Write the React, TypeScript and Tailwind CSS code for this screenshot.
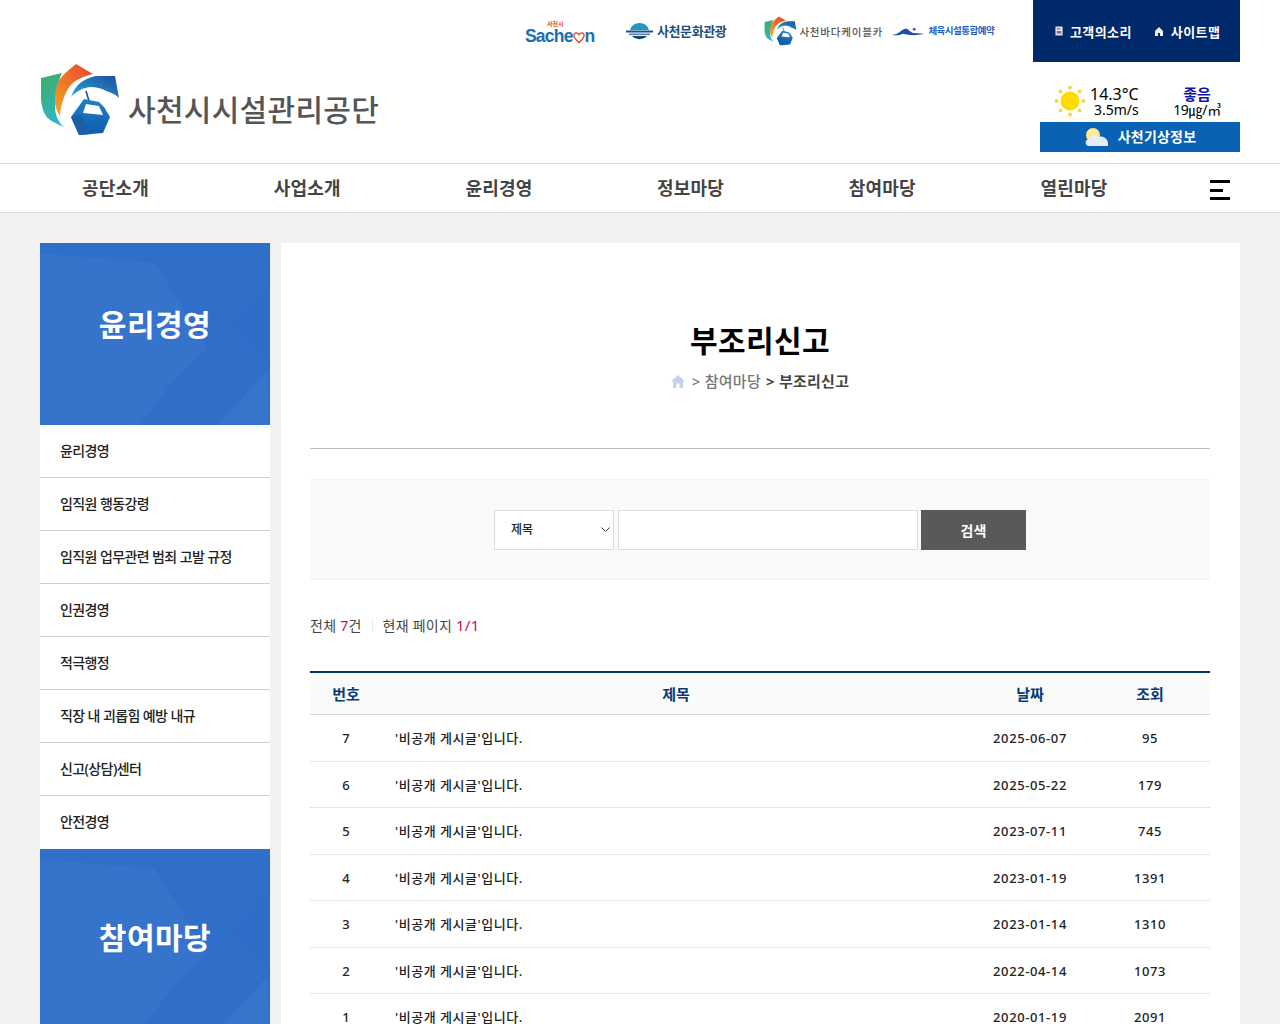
import React from 'react';

const NAV = ['공단소개', '사업소개', '윤리경영', '정보마당', '참여마당', '열린마당'];

const SIDE = [
  '윤리경영',
  '임직원 행동강령',
  '임직원 업무관련 범죄 고발 규정',
  '인권경영',
  '적극행정',
  '직장 내 괴롭힘 예방 내규',
  '신고(상담)센터',
  '안전경영',
];

const ROWS = [
  { no: 7, date: '2025-06-07', views: 95 },
  { no: 6, date: '2025-05-22', views: 179 },
  { no: 5, date: '2023-07-11', views: 745 },
  { no: 4, date: '2023-01-19', views: 1391 },
  { no: 3, date: '2023-01-14', views: 1310 },
  { no: 2, date: '2022-04-14', views: 1073 },
  { no: 1, date: '2020-01-19', views: 2091 },
];

// the shield + cable car mark, also used small in the top links
const LogoMark: React.FC<{ className?: string }> = ({ className }) => (
  <svg className={className} viewBox="0 0 80 76" fill="none">
    <defs>
      <linearGradient id="lg1" x1="0" y1="0" x2="0.4" y2="1">
        <stop offset="0" stopColor="#3fae5a" />
        <stop offset="1" stopColor="#2fb5c9" />
      </linearGradient>
      <linearGradient id="lg2" x1="1" y1="0" x2="0" y2="1">
        <stop offset="0" stopColor="#e8402f" />
        <stop offset="1" stopColor="#f5a623" />
      </linearGradient>
      <linearGradient id="lg3" x1="0" y1="1" x2="1" y2="0">
        <stop offset="0" stopColor="#2aa5d8" />
        <stop offset="1" stopColor="#1c4f9e" />
      </linearGradient>
      <linearGradient id="lg4" x1="0" y1="0" x2="0" y2="1">
        <stop offset="0" stopColor="#1f80cc" />
        <stop offset="1" stopColor="#0f5cab" />
      </linearGradient>
    </defs>
    <path d="M1 15 L22 10 C17 20 15 34 15 46 C16 54 19 60 24 64 C14 60 8 56 6 53 C2 46 1 40 1 33 Z" fill="url(#lg1)" />
    <path d="M36 1 L53 11 C44 13 38 16 34 19 C27 24 21 38 20 53 C17 48 15 44 15 39 C15 30 16 24 18 19 C22 12 30 6 36 1 Z" fill="url(#lg2)" />
    <path d="M31 34 C34 26 38 21 43 18 C48 15 53 13 59 13 L75 13 L79 35 C75 31 70 29 66 28 C61 25 56 24 51 24 C45 24 36 28 31 34 Z" fill="url(#lg3)" />
    <path d="M46 28 L49 38" stroke="#1c4f9e" strokeWidth="1.6" />
    <path d="M44 36 L59 39 L64 44 L70 54 L63 70 L39 72 L31 54 Z" fill="url(#lg4)" />
    <path d="M46 41 L59 43 L63 52 L43 50 Z" fill="#ffffff" />
    <path d="M31 54 L41 52 L52 71 L39 72 Z" fill="#1a5fa8" />
  </svg>
);

const SideBanner: React.FC<{ title: string; className: string; titleClass: string }> = ({ title, className, titleClass }) => (
  <div className={`relative overflow-hidden bg-[#2f6fca] flex justify-center text-white ${className}`}>
    <svg className="absolute left-0 top-0 w-[230px] h-[182px]" viewBox="0 0 230 182" preserveAspectRatio="none">
      <polygon points="0,10 115,20 167,105 133,138 100,182 0,182" fill="#ffffff" opacity="0.035" />
      <polygon points="177,182 227,128 230,182" fill="#ffffff" opacity="0.04" />
      <polygon points="193,82 230,40 230,119" fill="#1f5fc0" opacity="0.15" />
    </svg>
    <span className={`relative text-[30px] font-semibold leading-none tracking-[0.5px] ${titleClass}`}>{title}</span>
  </div>
);

export default function App() {
  return (
    <div className="h-[1024px] overflow-hidden bg-[#f1f1f1] font-['Noto_Sans','Noto_Sans_CJK_KR',sans-serif] text-[#333]">
      <header className="bg-white border-b border-[#dcdcdc]">
        <div className="h-[164px] border-b border-[#dedede] px-[40px] flex">
          <div className="flex-1 flex flex-col">
            {/* top partner links */}
            <div className="h-[62px] flex items-center pl-[485px] pt-[1px]">
              <div className="w-[70px] flex flex-col items-start">
                <span className="text-[6px] leading-[8px] text-[#e0452f] font-bold pl-[22px] whitespace-nowrap">사천시</span>
                <div className="flex items-center leading-[16px] text-[17.500px] font-bold text-[#1b6eb5] tracking-[-0.8px] font-['Liberation_Sans',sans-serif]">
                  <span>Sache</span>
                  <svg className="w-[12px] h-[14px] mt-[2px]" viewBox="0 0 13 14" fill="none">
                    <path d="M6.5 13 C2 9 1 7 1 5 C1 2.500 4.500 1.500 6.500 4.500 C8.500 1.500 12 2.500 12 5 C12 7 11 9 6.500 13 Z" stroke="#e8502f" strokeWidth="1.6" />
                  </svg>
                  <span>n</span>
                </div>
              </div>
              <div className="ml-[31px] flex items-center gap-[4px]">
                <svg className="w-[27px] h-[24px]" viewBox="0 0 27 24">
                  <path d="M4 10 A10 10 0 0 1 23 10 Z" fill="#1f9ab8" />
                  <rect x="0" y="10.500" width="27" height="2" fill="#1f4f8f" />
                  <rect x="3" y="13.500" width="21" height="1.600" fill="#5a7fa8" />
                  <path d="M6 16 H21 A9 7 0 0 1 6 16 Z" fill="#16427f" />
                </svg>
                <span className="text-[13px] font-bold text-[#1d4f80] tracking-[-0.4px]">사천문화관광</span>
              </div>
              <div className="ml-[38px] flex items-center">
                <LogoMark className="w-[33px] h-[31px]" />
                <span className="ml-[2px] w-[93px] text-[10.500px] leading-[14px] font-medium text-[#555] tracking-[0.8px] whitespace-nowrap">사천바다케이블카</span>
              </div>
              <div className="flex items-center">
                <svg className="w-[32px] h-[12px]" viewBox="0 0 36 12" fill="none">
                  <path d="M0 9 C8 9 10 3 16 2 C19 3 20 6 24 7 L36 8 C26 11 18 9 12 8 C8 10 4 10 0 9 Z" fill="#1f4fa8" />
                  <circle cx="25" cy="3" r="1.500" fill="#1f4fa8" />
                </svg>
                <span className="ml-[4px] text-[9.500px] font-bold text-[#1d5fc0] tracking-[-0.5px] whitespace-nowrap">체육시설통합예약</span>
              </div>
            </div>
            {/* logo */}
            <div className="flex items-start">
              <LogoMark className="w-[80px] h-[76px] mt-[1px]" />
              <span className="ml-[8px] mt-[28px] text-[30px] leading-[40px] font-medium text-[#555] tracking-[0.3px]">사천시시설관리공단</span>
            </div>
          </div>
          <div className="w-[207px] flex flex-col items-end">
            <div className="w-[207px] h-[62px] bg-[#00296b] flex items-center pl-[22px] pt-[3px] text-white text-[13px] font-bold tracking-[0.4px]">
              <svg className="w-[8px] h-[10px] mr-[7px] -mt-[3px]" viewBox="0 0 9 10">
                <rect x="0.500" y="0" width="8" height="10" fill="#e8e8e8" />
                <rect x="2" y="2" width="4" height="1.200" fill="#556" />
                <rect x="2" y="5" width="5" height="3" fill="#778" />
              </svg>
              <span>고객의소리</span>
              <svg className="w-[8px] h-[9px] ml-[23px] mr-[8px] -mt-[3px]" viewBox="0 0 8 9">
                <path d="M4 0 L8 4 V9 H5 V6 H3 V9 H0 V4 Z" fill="#eeeeee" />
              </svg>
              <span>사이트맵</span>
            </div>
            <div className="w-[200px] h-[60px] flex items-start">
              <svg className="w-[32px] h-[32px] ml-[14px] mt-[23px] shrink-0" viewBox="0 0 32 32">
                <circle cx="16" cy="16" r="9.500" fill="#ffdc00" />
                <g fill="#f2d94e">
                  <circle cx="16" cy="2.500" r="2" />
                  <circle cx="16" cy="29.500" r="2" />
                  <circle cx="2.500" cy="16" r="2" />
                  <circle cx="29.500" cy="16" r="2" />
                  <circle cx="6.500" cy="6.500" r="2" />
                  <circle cx="25.500" cy="6.500" r="2" />
                  <circle cx="6.500" cy="25.500" r="2" />
                  <circle cx="25.500" cy="25.500" r="2" />
                </g>
              </svg>
              <div className="mt-[24px] ml-[4px] w-[52px] text-black whitespace-nowrap">
                <div className="text-[16px] leading-[16px]">14.3°C</div>
                <div className="text-[14px] leading-[16px] pl-[4px]">3.5m/s</div>
              </div>
              <div className="ml-[28px] mt-[24px] w-[54px] text-center">
                <div className="text-[15px] leading-[16px] font-bold text-[#1414a8]">좋음</div>
                <div className="text-[14px] leading-[16px] text-black tracking-[-0.3px]">19㎍/㎥</div>
              </div>
            </div>
            <div className="w-[200px] h-[30px] pb-[1px] bg-[#0a62b4] flex items-center justify-center text-white text-[14px] font-semibold tracking-[0.2px]">
              <svg className="w-[26px] h-[20px] mr-[8px]" viewBox="0 0 26 20">
                <circle cx="9" cy="8" r="7" fill="#ffe98a" />
                <path d="M5 19 C1 19 0 13 5 12 C6 7 13 6 15 10 C20 8 25 13 24 19 Z" fill="#e6ecfa" />
              </svg>
              <span>사천기상정보</span>
            </div>
          </div>
        </div>
        <nav className="h-[48px] px-[40px] flex items-center relative">
          {NAV.map((n) => (
            <div key={n} className="w-[191.700px] pl-[42px] pt-[1px] text-[18px] font-bold text-[#444] leading-[47px] tracking-[0.2px]">{n}</div>
          ))}
          <div className="absolute left-[1210px] top-[16px] w-[20px] h-[20px] flex flex-col justify-between">
            <span className="block h-[3px] w-[20px] bg-black" />
            <span className="block h-[3px] w-[13px] bg-black" />
            <span className="block h-[3px] w-[20px] bg-black" />
          </div>
        </nav>
      </header>

      <div className="px-[40px] pt-[30px] flex">
        <aside className="w-[230px] shrink-0">
          <SideBanner title="윤리경영" className="h-[182px]" titleClass="mt-[67px]" />
          <ul className="bg-white">
            {SIDE.map((s, i) => (
              <li key={s} className={`h-[53px] pl-[20px] pb-[2px] flex items-center text-[14px] font-medium tracking-[-0.6px] text-[#222] ${i < SIDE.length - 1 ? 'border-b border-[#cfcfcf]' : ''}`}>{s}</li>
            ))}
          </ul>
          <SideBanner title="참여마당" className="h-[182px]" titleClass="mt-[74px]" />
        </aside>

        <main className="ml-[11px] w-[959px] bg-white pl-[29px] pr-[30px]">
          <div className="h-[206px] border-b border-[#bdbdbd] flex flex-col items-center">
            <h2 className="mt-[76px] text-[30px] leading-[44px] font-bold text-black tracking-[0.4px]">부조리신고</h2>
            <div className="mt-[6px] flex items-center text-[15px] leading-[24px] font-medium text-[#777] tracking-[0.25px]">
              <svg className="w-[14px] h-[13px] mr-[7px]" viewBox="0 0 14 13">
                <path d="M7 0 L14 6.500 H12 V13 H8.500 V8.500 H5.500 V13 H2 V6.500 H0 Z" fill="#c3d2e6" />
              </svg>
              <span>&gt; 참여마당</span>
              <span className="ml-[5px] font-bold text-[#444]">&gt; 부조리신고</span>
            </div>
          </div>

          <div className="mt-[30px] h-[101px] bg-[#fafafa] border-t border-b border-[#f3f3f3] flex items-center justify-center">
            <div className="relative w-[120px] h-[40px]">
              <select className="appearance-none w-[120px] h-[40px] bg-white border border-[#dcdcdc] pl-[16px] pt-[1px] text-[12px] font-medium text-[#222]" defaultValue="제목">
                <option>제목</option>
              </select>
              <svg className="absolute right-[4px] top-[17px] w-[9px] h-[6px]" viewBox="0 0 9 6" fill="none">
                <path d="M0.500 0.500 L4.500 4.500 L8.500 0.500" stroke="#333" strokeWidth="1" />
              </svg>
            </div>
            <input className="ml-[4px] w-[300px] h-[40px] bg-white border border-[#dcdcdc]" />
            <button className="ml-[3px] w-[105px] h-[40px] pt-[1px] bg-[#595959] text-white text-[14px] font-semibold">검색</button>
          </div>

          <div className="mt-[33px] h-[24px] flex items-center text-[14px] text-[#444] tracking-[0.25px]">
            <span>전체 <span className="text-[#c8104e]">7</span>건</span>
            <span className="mx-[10px] w-px h-[12px] bg-[#e6e6e6]" />
            <span>현재 페이지 <span className="text-[#c8104e] text-[15px]">1/1</span></span>
          </div>

          <table className="mt-[34px] w-[900px] table-fixed border-t-2 border-[#003764] text-[13px]">
            <thead>
              <tr className="h-[42.500px] bg-[#fafafa] border-b border-[#d8d8d8] text-[15px] text-[#0a3a78]">
                <th className="w-[72px] pt-[1px] font-bold">번호</th>
                <th className="pt-[1px] font-bold">제목</th>
                <th className="w-[120px] pt-[1px] font-bold">날짜</th>
                <th className="w-[120px] pt-[1px] font-bold">조회</th>
              </tr>
            </thead>
            <tbody>
              {ROWS.map((r) => (
                <tr key={r.no} className="h-[46.500px] border-b border-[#e6e6e6] text-center font-medium text-[#222]">
                  <td className="pt-[2px]">{r.no}</td>
                  <td className="pt-[2px] text-left pl-[13px] tracking-[0.55px]">'비공개 게시글'입니다.</td>
                  <td className="pt-[2px] tracking-[0.6px]">{r.date}</td>
                  <td className="pt-[2px] tracking-[0.6px]">{r.views}</td>
                </tr>
              ))}
            </tbody>
          </table>
        </main>
      </div>
    </div>
  );
}
